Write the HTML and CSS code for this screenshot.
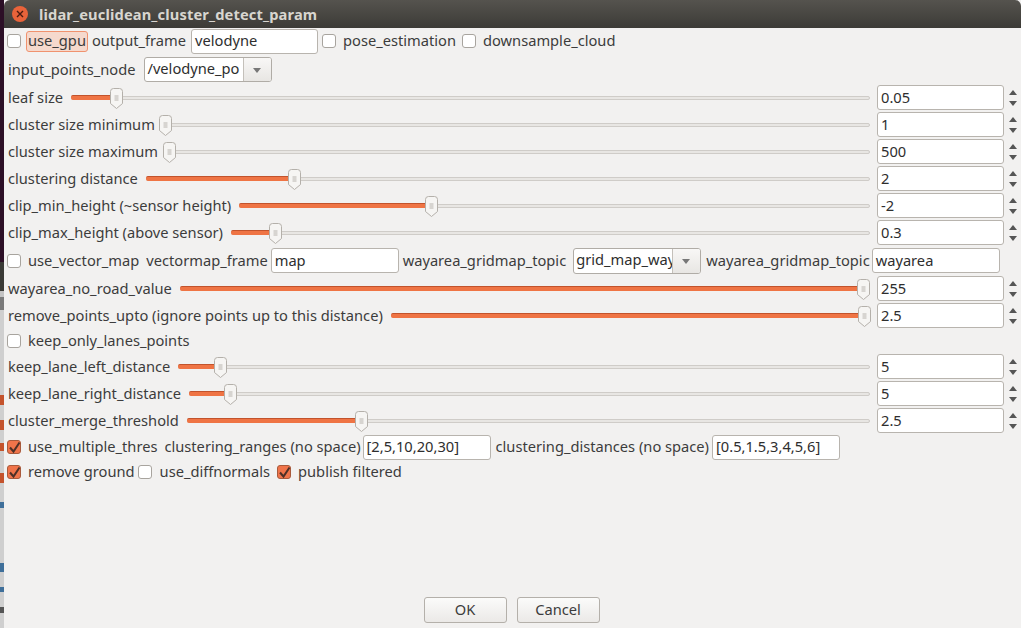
FILE: index.html
```html
<!DOCTYPE html>
<html lang="en">
<head>
    <meta charset="UTF-8">
    <title>lidar_euclidean_cluster_detect_param</title>
    <link rel="stylesheet" href="styles.css">
</head>
<body>
    <!-- desktop peeking out on the left of the window -->
    <div class="desktop"></div>

    <svg class="defs" width="0" height="0">
        <symbol id="knob" viewBox="0 0 13 21">
            <path d="M3.5.5h6a3 3 0 0 1 3 3v12l-6 5-6-5v-12a3 3 0 0 1 3-3z" fill="#f6f5f3" stroke="#b4b0aa"/>
            <path d="M4.5 8h4M4.5 10h4M4.5 12h4" stroke="#b8b4ae"/>
        </symbol>
        <symbol id="tick" viewBox="0 0 15 15">
            <path d="M3 7.5 6.5 11.5 12.5 2.5" fill="none" stroke="#4d3027" stroke-width="2"/>
        </symbol>
    </svg>

    <div class="window">
        <header class="titlebar">
            <span class="close-btn">
                <svg width="8" height="8" viewBox="0 0 8 8"><path d="M1 1 7 7M7 1 1 7" stroke="#4a1a10" stroke-width="1.4"/></svg>
            </span>
            <span class="title">lidar_euclidean_cluster_detect_param</span>
        </header>

        <main class="content">
            <div class="row row-top">
                <span class="check"></span>
                <span class="toggle-on">use_gpu</span>
                <span class="label label-output">output_frame</span>
                <span class="entry entry-frame">velodyne</span>
                <span class="check check-pose"></span>
                <span class="label label-check">pose_estimation</span>
                <span class="check check-down"></span>
                <span class="label label-check">downsample_cloud</span>
            </div>

            <div class="row row-combo">
                <span class="label">input_points_node</span>
                <span class="combo combo-input"><span class="combo-text">/velodyne_po</span><span class="combo-arrow"></span></span>
            </div>

            <div class="sliders">
                <div class="row row-slider">
                    <span class="label">leaf size</span>
                    <span class="slider"><span class="fill" style="width: 45px"></span><svg class="knob"><use href="#knob"/></svg></span>
                    <span class="spin"><span class="entry">0.05</span><span class="arrows"><i class="up"></i><i class="down"></i></span></span>
                </div>
                <div class="row row-slider">
                    <span class="label">cluster size minimum</span>
                    <span class="slider"><span class="fill fill-none" style="width: 2px"></span><svg class="knob"><use href="#knob"/></svg></span>
                    <span class="spin"><span class="entry">1</span><span class="arrows"><i class="up"></i><i class="down"></i></span></span>
                </div>
                <div class="row row-slider">
                    <span class="label">cluster size maximum</span>
                    <span class="slider"><span class="fill fill-none" style="width: 3px"></span><svg class="knob"><use href="#knob"/></svg></span>
                    <span class="spin"><span class="entry">500</span><span class="arrows"><i class="up"></i><i class="down"></i></span></span>
                </div>
                <div class="row row-slider">
                    <span class="label">clustering distance</span>
                    <span class="slider"><span class="fill" style="width: 148px"></span><svg class="knob"><use href="#knob"/></svg></span>
                    <span class="spin"><span class="entry">2</span><span class="arrows"><i class="up"></i><i class="down"></i></span></span>
                </div>
                <div class="row row-slider">
                    <span class="label">clip_min_height (~sensor height)</span>
                    <span class="slider"><span class="fill" style="width: 192px"></span><svg class="knob"><use href="#knob"/></svg></span>
                    <span class="spin"><span class="entry">-2</span><span class="arrows"><i class="up"></i><i class="down"></i></span></span>
                </div>
                <div class="row row-slider">
                    <span class="label">clip_max_height (above sensor)</span>
                    <span class="slider"><span class="fill" style="width: 44px"></span><svg class="knob"><use href="#knob"/></svg></span>
                    <span class="spin"><span class="entry">0.3</span><span class="arrows"><i class="up"></i><i class="down"></i></span></span>
                </div>
            </div>

            <div class="row row-map">
                <span class="check"></span>
                <span class="label label-check">use_vector_map</span>
                <span class="label label-vector">vectormap_frame</span>
                <span class="entry entry-map">map</span>
                <span class="label label-way-first">wayarea_gridmap_topic</span>
                <span class="combo combo-grid"><span class="combo-text">grid_map_way</span><span class="combo-arrow"></span></span>
                <span class="label label-way">wayarea_gridmap_topic</span>
                <span class="entry entry-way">wayarea</span>
            </div>

            <div class="sliders">
                <div class="row row-slider">
                    <span class="label">wayarea_no_road_value</span>
                    <span class="slider"><span class="fill" style="width: 683px"></span><svg class="knob"><use href="#knob"/></svg></span>
                    <span class="spin"><span class="entry">255</span><span class="arrows"><i class="up"></i><i class="down"></i></span></span>
                </div>
                <div class="row row-slider">
                    <span class="label">remove_points_upto (ignore points up to this distance)</span>
                    <span class="slider"><span class="fill" style="width: 473px"></span><svg class="knob"><use href="#knob"/></svg></span>
                    <span class="spin"><span class="entry">2.5</span><span class="arrows"><i class="up"></i><i class="down"></i></span></span>
                </div>
            </div>

            <div class="row row-lanes">
                <span class="check"></span>
                <span class="label label-check">keep_only_lanes_points</span>
            </div>

            <div class="sliders">
                <div class="row row-slider">
                    <span class="label">keep_lane_left_distance</span>
                    <span class="slider"><span class="fill" style="width: 42px"></span><svg class="knob"><use href="#knob"/></svg></span>
                    <span class="spin"><span class="entry">5</span><span class="arrows"><i class="up"></i><i class="down"></i></span></span>
                </div>
                <div class="row row-slider">
                    <span class="label">keep_lane_right_distance</span>
                    <span class="slider"><span class="fill" style="width: 41px"></span><svg class="knob"><use href="#knob"/></svg></span>
                    <span class="spin"><span class="entry">5</span><span class="arrows"><i class="up"></i><i class="down"></i></span></span>
                </div>
                <div class="row row-slider">
                    <span class="label">cluster_merge_threshold</span>
                    <span class="slider"><span class="fill" style="width: 174px"></span><svg class="knob"><use href="#knob"/></svg></span>
                    <span class="spin"><span class="entry">2.5</span><span class="arrows"><i class="up"></i><i class="down"></i></span></span>
                </div>
            </div>

            <div class="row row-multi">
                <span class="check checked"><svg width="15" height="15"><use href="#tick"/></svg></span>
                <span class="label label-check">use_multiple_thres</span>
                <span class="label label-ranges">clustering_ranges (no space)</span>
                <span class="entry entry-ranges">[2,5,10,20,30]</span>
                <span class="label label-dist">clustering_distances (no space)</span>
                <span class="entry entry-dist">[0.5,1.5,3,4,5,6]</span>
            </div>

            <div class="row row-ground">
                <span class="check checked"><svg width="15" height="15"><use href="#tick"/></svg></span>
                <span class="label label-check">remove ground</span>
                <span class="check check-diff"></span>
                <span class="label label-diff">use_diffnormals</span>
                <span class="check checked check-pub"><svg width="15" height="15"><use href="#tick"/></svg></span>
                <span class="label label-check">publish filtered</span>
            </div>

            <div class="buttons">
                <button class="btn">OK</button>
                <button class="btn">Cancel</button>
            </div>
        </main>
    </div>
</body>
</html>
```

FILE: styles.css
```css
/* page */
html, body {
    margin: 0;
    padding: 0;
    height: 100%;
}

body {
    display: flex;
    width: 1021px;
    height: 628px;
    overflow: hidden;
    font-family: "Noto Sans", sans-serif;
    font-size: 14.67px;
    color: #3c3c3c;
    background-color: #2c0f26;
}

.defs {
    display: none;
}

/* slices of other windows behind this one */
.desktop {
    width: 4px;
    flex-shrink: 0;
    background: linear-gradient(#2c0f26 262px, #3a3a36 262px, #3a3a36 291px, #c4c4c4 291px, #c4c4c4 297px, #7a7a7a 297px, #7a7a7a 310px, #cfcfcf 310px, #cfcfcf 395px, #c4532c 395px, #c4532c 405px, #cfcfcf 405px, #cfcfcf 420px, #c4532c 420px, #c4532c 430px, #cfcfcf 430px, #cfcfcf 443px, #c4532c 443px, #c4532c 451px, #cfcfcf 451px, #cfcfcf 473px, #c4532c 473px, #c4532c 483px, #cfcfcf 483px, #cfcfcf 502px, #3f6f9a 502px, #3f6f9a 508px, #cfcfcf 508px, #cfcfcf 563px, #3f6f9a 563px, #3f6f9a 572px, #cfcfcf 572px, #cfcfcf 587px, #3f6f9a 587px, #3f6f9a 592px, #cfcfcf 592px, #cfcfcf 607px, #555 607px, #555 613px, #cfcfcf 613px);
}

.window {
    flex: 1;
    min-width: 0;
    display: flex;
    flex-direction: column;
    background-color: #f2f1f0;
}

/* title bar */
.titlebar {
    height: 28px;
    flex-shrink: 0;
    display: flex;
    align-items: center;
    background: linear-gradient(#55534e, #3c3b37);
    border-radius: 6px 6px 0 0;
    padding-left: 8px;
}

.close-btn {
    width: 16px;
    height: 16px;
    border-radius: 50%;
    background-color: #e9633a;
    display: flex;
    align-items: center;
    justify-content: center;
}

.title {
    margin-left: 11px;
    font-weight: 700;
    color: #d8d6d0;
    font-size: 14.67px;
    letter-spacing: 0.14px;
}

/* content */
.content {
    flex: 1;
    min-width: 0;
    display: flex;
    flex-direction: column;
    padding: 0 0 0 3px;
}

.row {
    display: flex;
    align-items: center;
    padding-left: 1px;
}

.label {
    white-space: nowrap;
    padding-bottom: 2px;
}

.check {
    box-sizing: border-box;
    width: 14px;
    height: 14px;
    margin-left: -1px;
    flex-shrink: 0;
    border: 1px solid #a8a49e;
    border-radius: 3px;
    background-color: #fff;
    display: inline-flex;
    position: relative;
}

.check.checked {
    background-color: #f0744a;
    border-color: #a85a3c;
}

.check svg {
    position: absolute;
    left: -1px;
    top: -1px;
}

.label-check {
    margin-left: 7px;
}

.entry {
    box-sizing: border-box;
    display: flex;
    align-items: center;
    height: 25px;
    padding-left: 3px;
    padding-bottom: 2px;
    background-color: #fff;
    border: 1px solid #b8b4ae;
    border-radius: 3px;
    white-space: nowrap;
    color: #2e2e2e;
}

/* first rows */
.row-top {
    height: 26px;
}

.toggle-on {
    margin-left: 5px;
    padding: 0 1px;
    height: 21px;
    line-height: 17px;
    box-sizing: border-box;
    border: 1px solid #f0926e;
    border-radius: 3px;
    background-color: #f5d9cd;
}

.label-output {
    margin-left: 4px;
}

.entry-frame {
    width: 127px;
    margin-left: 5px;
}

.check-pose {
    margin-left: 4px;
}

.check-down {
    margin-left: 6px;
}

.row-combo {
    height: 29px;
    padding-top: 1px;
}

.combo {
    box-sizing: border-box;
    display: flex;
    height: 25px;
    background-color: #fff;
    border: 1px solid #b0aca6;
    border-radius: 3px;
    overflow: hidden;
    color: #2e2e2e;
}

.combo-text {
    flex: 1;
    overflow: hidden;
    white-space: nowrap;
    padding-left: 2px;
    line-height: 21px;
}

.combo-arrow {
    width: 27px;
    flex-shrink: 0;
    border-left: 1px solid #c4c0ba;
    background: linear-gradient(#f8f7f6, #e8e6e3);
    position: relative;
}

.combo-arrow::after {
    content: "";
    position: absolute;
    left: 9px;
    top: 10px;
    border-left: 4px solid transparent;
    border-right: 4px solid transparent;
    border-top: 5px solid #777;
}

.combo-input {
    width: 128px;
    margin-left: 9px;
}

.combo-grid {
    width: 128px;
    height: 26px;
    margin-left: 7px;
}

/* slider rows */
.sliders {
    display: flex;
    flex-direction: column;
}

.row-slider {
    height: 27px;
}

.slider {
    flex: 1;
    min-width: 0;
    box-sizing: border-box;
    height: 4px;
    margin-left: 8px;
    background-color: #e8e6e3;
    border: 1px solid #cfccc8;
    border-radius: 2px;
    display: flex;
    align-items: center;
}

.fill {
    height: 5px;
    flex-shrink: 0;
    margin-left: -1px;
    background-color: #ef7444;
    border-top: 1px solid #c2532c;
    box-sizing: border-box;
    border-radius: 2px 0 0 2px;
}

.fill-none {
    background: none;
    border: none;
}

.knob {
    width: 13px;
    height: 21px;
    flex-shrink: 0;
    margin-left: -6px;
    margin-top: 2px;
}

.spin {
    display: flex;
    align-items: center;
    margin-left: 7px;
    width: 144px;
    flex-shrink: 0;
}

.spin .entry {
    width: 127px;
}

.arrows {
    display: flex;
    flex-direction: column;
    gap: 6px;
    margin-left: 5px;
}

.up {
    border-left: 4px solid transparent;
    border-right: 4px solid transparent;
    border-bottom: 5px solid #555;
}

.down {
    border-left: 4px solid transparent;
    border-right: 4px solid transparent;
    border-top: 5px solid #555;
}

/* map row */
.row-map {
    height: 29px;
}

.label-vector {
    margin-left: 7px;
}

.entry-map {
    width: 128px;
    margin-left: 3px;
}

.label-way-first {
    margin-left: 4px;
}

.label-way {
    margin-left: 5px;
}

.entry-way {
    width: 128px;
    margin-left: 2px;
}

.row-lanes {
    height: 24px;
}

/* threshold rows */
.row-multi {
    height: 26px;
}

.label-ranges {
    margin-left: 7px;
}

.entry-ranges {
    width: 128px;
    margin-left: 2px;
}

.label-dist {
    margin-left: 5px;
}

.entry-dist {
    width: 128px;
    margin-left: 3px;
}

.row-ground {
    height: 24px;
}

.check-diff {
    margin-left: 3px;
}

.label-diff {
    margin-left: 8px;
}

.check-pub {
    margin-left: 7px;
}

/* buttons */
.buttons {
    margin-top: auto;
    display: flex;
    justify-content: center;
    gap: 10px;
    padding-bottom: 5px;
    padding-right: 5px;
}

.btn {
    width: 83px;
    height: 26px;
    padding: 0 0 2px;
    font-family: inherit;
    font-size: 14.67px;
    color: #3c3c3c;
    background: linear-gradient(#fbfbfa, #ebe9e7);
    border: 1px solid #b4b0aa;
    border-radius: 3px;
}
```
